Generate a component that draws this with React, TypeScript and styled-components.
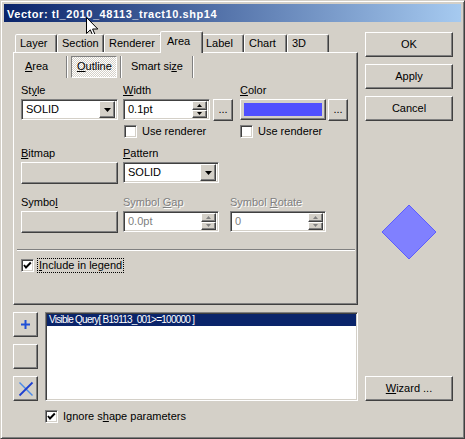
import React from "react";
import styled, { createGlobalStyle, css } from "styled-components";

const face = "#d4d0c8";
const shadow = "#808080";
const dark = "#404040";

const GlobalStyle = createGlobalStyle`
  html, body { margin: 0; padding: 0; background: ${face}; }
  body {
    font-family: Tahoma, "Liberation Sans", Arial, sans-serif;
    font-size: 11px;
    line-height: 13px;
    color: #000;
  }
`;

const raised = css`
  border: 1px solid;
  border-color: #fff ${dark} ${dark} #fff;
  box-shadow: inset -1px -1px ${shadow}, inset 1px 1px ${face};
`;

const sunken = css`
  border: 1px solid;
  border-color: ${shadow} #fff #fff ${shadow};
  box-shadow: inset 1px 1px ${dark}, inset -1px -1px ${face};
`;

const Window = styled.div`
  position: relative;
  width: 465px;
  height: 439px;
  box-sizing: border-box;
  background: ${face};
  border: 1px solid;
  border-color: ${face} ${dark} ${dark} ${face};
  box-shadow: inset 1px 1px #fff, inset -1px -1px ${shadow};
  padding: 3px;
  display: flex;
  flex-direction: column;
`;

const TitleBar = styled.div`
  height: 18px;
  box-sizing: border-box;
  padding: 2px 0 0 3px;
  line-height: 16px;
  background: linear-gradient(to right, #0a246a, #a6caf0);
  color: #fff;
  font-weight: bold;
  letter-spacing: 0.55px;
  white-space: nowrap;
`;

const Cursor = styled.svg`
  position: absolute;
  left: 85px;
  top: 16px;
`;

const Body = styled.div`
  flex: 1;
  display: grid;
  grid-template-columns: 345px 88px;
  grid-template-rows: 274px 89px auto;
  column-gap: 7px;
  row-gap: 7px;
  padding: 9px 8px 0 9px;
`;

/* ---------- tabs ---------- */

const TabControl = styled.div`
  display: flex;
  flex-direction: column;
`;

const TabStrip = styled.div`
  display: flex;
  align-items: flex-end;
  height: 21px;
  padding-left: 2px;
`;

const Tab = styled.div<{ $w: number; $active?: boolean }>`
  position: relative;
  z-index: ${(p) => (p.$active ? 2 : 1)};
  box-sizing: border-box;
  width: ${(p) => p.$w}px;
  height: ${(p) => (p.$active ? 22 : 18)}px;
  margin: ${(p) => (p.$active ? "0 -2px -1px -2px" : "0")};
  padding: ${(p) => (p.$active ? "3px 0 0 6px" : "2px 0 0 4px")};
  border: 1px solid;
  border-bottom: none;
  border-color: #fff ${dark} transparent #fff;
  border-radius: 2px 2px 0 0;
  box-shadow: inset -1px 0 ${shadow};
  background: ${face};
  white-space: nowrap;
`;

const Panel = styled.div`
  box-sizing: border-box;
  height: 253px;
  border: 1px solid;
  border-color: #fff ${dark} ${dark} #fff;
  box-shadow: inset -1px -1px ${shadow};
  padding: 3px 0 0 7px;
  display: flex;
  flex-direction: column;
`;

const SubTabs = styled.div`
  display: flex;
  align-items: center;
  height: 22px;
  margin-left: -2px;
`;

const SubTab = styled.div<{ $w: number; $pressed?: boolean }>`
  box-sizing: border-box;
  width: ${(p) => p.$w}px;
  height: 22px;
  padding: 4px 0 0 6px;
  white-space: nowrap;
  ${(p) =>
    p.$pressed &&
    css`
      border: 1px solid;
      border-color: ${shadow} #fff #fff ${shadow};
      padding: 3px 0 0 5px;
      background: repeating-conic-gradient(#fff 0 25%, ${face} 0 50%) 0 0 / 2px 2px;
    `}
`;

const SubSep = styled.div`
  width: 2px;
  height: 22px;
  box-sizing: border-box;
  border-left: 1px solid ${shadow};
  border-right: 1px solid #fff;
  margin: 0 3px;
`;

/* ---------- form ---------- */

const FormRow = styled.div<{ $cols: string; $mt: number }>`
  display: grid;
  grid-template-columns: ${(p) => p.$cols};
  align-items: start;
  margin-top: ${(p) => p.$mt}px;
`;

const Field = styled.div`
  display: flex;
  flex-direction: column;
`;

const Label = styled.div<{ $disabled?: boolean }>`
  height: 13px;
  margin-bottom: 2px;
  white-space: nowrap;
  color: ${(p) => (p.$disabled ? shadow : "#000")};
  text-shadow: ${(p) => (p.$disabled ? "1px 1px #fff" : "none")};
`;

const Inline = styled.div<{ $gap: number }>`
  display: flex;
  gap: ${(p) => p.$gap}px;
`;

const Combo = styled.div<{ $w: number }>`
  ${sunken};
  box-sizing: border-box;
  width: ${(p) => p.$w}px;
  height: 21px;
  background: #fff;
  display: flex;
  align-items: center;
  padding: 2px;
`;

const FieldText = styled.span<{ $disabled?: boolean }>`
  flex: 1;
  padding-left: 2px;
  color: ${(p) => (p.$disabled ? shadow : "#000")};
`;

const DropButton = styled.div`
  ${raised};
  box-sizing: border-box;
  width: 16px;
  height: 17px;
  background: ${face};
  display: flex;
  align-items: center;
  justify-content: center;
`;

const SpinBox = styled(Combo)``;

const SpinButtons = styled.div`
  display: flex;
  flex-direction: column;
  width: 15px;
  height: 17px;
`;

const SpinHalf = styled.div`
  ${raised};
  flex: 1;
  box-sizing: border-box;
  background: ${face};
  display: flex;
  align-items: center;
  justify-content: center;
`;

const Button = styled.div<{ $w: number; $h: number }>`
  ${raised};
  box-sizing: border-box;
  width: ${(p) => p.$w}px;
  height: ${(p) => p.$h}px;
  background: ${face};
  display: flex;
  align-items: center;
  justify-content: center;
  white-space: nowrap;
`;

const DotsButton = styled(Button)`
  align-items: flex-end;
  padding-bottom: 5px;
  line-height: 11px;
`;

const ColorButton = styled(Button)`
  padding: 3px;
`;

const Swatch = styled.div<{ $color: string }>`
  flex: 1;
  align-self: stretch;
  background: ${(p) => p.$color};
`;

const CheckLine = styled.div<{ $ml?: number }>`
  display: flex;
  align-items: center;
  gap: 5px;
  height: 13px;
  margin-left: ${(p) => p.$ml ?? 0}px;
  white-space: nowrap;
`;

const Box = styled.span`
  ${sunken};
  box-sizing: border-box;
  width: 13px;
  height: 13px;
  background: #fff;
  display: inline-flex;
`;

const FocusText = styled.span`
  outline: 1px dotted #000;
  outline-offset: 0;
  padding: 0 1px;
  margin-left: -1px;
`;

const Separator = styled.div`
  height: 2px;
  box-sizing: border-box;
  border-top: 1px solid ${shadow};
  border-bottom: 1px solid #fff;
  margin: 16px 2px 0 -4px;
`;

/* ---------- right column ---------- */

const SideButtons = styled.div`
  display: flex;
  flex-direction: column;
  gap: 7px;
  padding-top: 1px;
`;

const DiamondWrap = styled.div`
  display: flex;
  justify-content: center;
  margin-top: 83px;
`;

const WizardCell = styled.div`
  align-self: end;
`;

/* ---------- bottom ---------- */

const ListArea = styled.div`
  display: flex;
  gap: 7px;
`;

const ToolColumn = styled.div`
  display: flex;
  flex-direction: column;
  gap: 7px;
`;

const ListBox = styled.div`
  ${sunken};
  flex: 1;
  box-sizing: border-box;
  height: 89px;
  background: #fff;
  padding: 1px 1px 0 1px;
`;

const ListItem = styled.div<{ $selected?: boolean }>`
  height: 12px;
  line-height: 12px;
  padding-left: 2px;
  font-size: 10px;
  letter-spacing: -0.75px;
  white-space: nowrap;
  background: ${(p) => (p.$selected ? "#0a246a" : "transparent")};
  color: ${(p) => (p.$selected ? "#fff" : "#000")};
`;

const BottomCheck = styled.div`
  grid-column: 1 / 3;
  padding: 2px 0 0 32px;
`;

/* ---------- drawings ---------- */

const Arrow = ({ dir, w, h, color }: { dir: "up" | "down"; w: number; h: number; color: string }) => (
  <svg width={w} height={h} viewBox={`0 0 ${w} ${h}`}>
    <polygon
      points={dir === "up" ? `0,${h} ${w / 2},0 ${w},${h}` : `0,0 ${w},0 ${w / 2},${h}`}
      fill={color}
    />
  </svg>
);

const CheckMark = () => (
  <svg width="11" height="11" viewBox="0 0 11 11">
    <polyline points="2,5 4,7.5 8.8,2.5" fill="none" stroke="#000" strokeWidth="1.9" />
  </svg>
);

const CheckBox = ({ checked }: { checked?: boolean }) => <Box>{checked && <CheckMark />}</Box>;

const DropCombo = ({ w, value }: { w: number; value: string }) => (
  <Combo $w={w}>
    <FieldText>{value}</FieldText>
    <DropButton>
      <Arrow dir="down" w={7} h={4} color="#000" />
    </DropButton>
  </Combo>
);

const Spin = ({ w, value, disabled }: { w: number; value: string; disabled?: boolean }) => (
  <SpinBox $w={w}>
    <FieldText $disabled={disabled}>{value}</FieldText>
    <SpinButtons>
      <SpinHalf>
        <Arrow dir="up" w={5} h={3} color={disabled ? shadow : "#000"} />
      </SpinHalf>
      <SpinHalf>
        <Arrow dir="down" w={5} h={3} color={disabled ? shadow : "#000"} />
      </SpinHalf>
    </SpinButtons>
  </SpinBox>
);

const tabs = [
  { label: "Layer", w: 42 },
  { label: "Section", w: 47 },
  { label: "Renderer", w: 58 },
  { label: "Area", w: 43, active: true },
  { label: "Label", w: 43 },
  { label: "Chart", w: 43 },
  { label: "3D", w: 42 },
];

const colsA = "102px 117px 110px";
const colsD = "102px 107px 110px";

export default function App() {
  return (
    <>
      <GlobalStyle />
      <Window>
        <TitleBar>Vector: tl_2010_48113_tract10.shp14</TitleBar>
        <Body>
          <TabControl>
            <TabStrip>
              {tabs.map((t) => (
                <Tab key={t.label} $w={t.w} $active={t.active}>
                  {t.label}
                </Tab>
              ))}
            </TabStrip>
            <Panel>
              <SubTabs>
                <SubTab $w={44}>
                  <u>A</u>rea
                </SubTab>
                <SubSep />
                <SubTab $w={46} $pressed>
                  <u>O</u>utline
                </SubTab>
                <SubSep />
                <SubTab $w={64}>
                  Smart si<u>z</u>e
                </SubTab>
                <SubSep />
              </SubTabs>

              <FormRow $cols={colsA} $mt={6}>
                <Field>
                  <Label>
                    St<u>y</u>le
                  </Label>
                  <DropCombo w={97} value="SOLID" />
                </Field>
                <Field>
                  <Label>
                    <u>W</u>idth
                  </Label>
                  <Inline $gap={3}>
                    <Spin w={87} value="0.1pt" />
                    <DotsButton $w={20} $h={22}>...</DotsButton>
                  </Inline>
                </Field>
                <Field>
                  <Label>
                    <u>C</u>olor
                  </Label>
                  <Inline $gap={2}>
                    <ColorButton $w={86} $h={21}>
                      <Swatch $color="#5050ff" />
                    </ColorButton>
                    <DotsButton $w={20} $h={22}>...</DotsButton>
                  </Inline>
                </Field>
              </FormRow>

              <FormRow $cols={colsA} $mt={4}>
                <span />
                <CheckLine $ml={1}>
                  <CheckBox />
                  Use renderer
                </CheckLine>
                <CheckLine>
                  <CheckBox />
                  Use renderer
                </CheckLine>
              </FormRow>

              <FormRow $cols={colsA} $mt={9}>
                <Field>
                  <Label>
                    <u>B</u>itmap
                  </Label>
                  <Button $w={97} $h={22} />
                </Field>
                <Field>
                  <Label>
                    <u>P</u>attern
                  </Label>
                  <DropCombo w={96} value="SOLID" />
                </Field>
              </FormRow>

              <FormRow $cols={colsD} $mt={12}>
                <Field>
                  <Label>
                    Symbo<u>l</u>
                  </Label>
                  <Button $w={97} $h={22} />
                </Field>
                <Field>
                  <Label $disabled>
                    Symbol <u>G</u>ap
                  </Label>
                  <Spin w={96} value="0.0pt" disabled />
                </Field>
                <Field>
                  <Label $disabled>
                    Symbol <u>R</u>otate
                  </Label>
                  <Spin w={96} value="0" disabled />
                </Field>
              </FormRow>

              <Separator />

              <FormRow $cols="1fr" $mt={8}>
                <CheckLine>
                  <CheckBox checked />
                  <FocusText>
                    <u>I</u>nclude in legend
                  </FocusText>
                </CheckLine>
              </FormRow>
            </Panel>
          </TabControl>

          <div>
            <SideButtons>
              <Button $w={88} $h={25}>OK</Button>
              <Button $w={88} $h={25}>Apply</Button>
              <Button $w={88} $h={25}>Cancel</Button>
            </SideButtons>
            <DiamondWrap>
              <svg width="56" height="56" viewBox="0 0 56 56">
                <polygon points="28,1 55,28 28,55 1,28" fill="#8080ff" stroke="#5c5cff" strokeWidth="1" />
              </svg>
            </DiamondWrap>
          </div>

          <ListArea>
            <ToolColumn>
              <Button $w={25} $h={25}>
                <svg width="11" height="11" viewBox="0 0 11 11">
                  <path d="M5.5 1v9M1 5.5h9" stroke="#1f4fd6" strokeWidth="2" />
                </svg>
              </Button>
              <Button $w={25} $h={25} />
              <Button $w={25} $h={25}>
                <svg width="16" height="16" viewBox="0 0 16 16">
                  <path d="M1.5 1.5L14.5 14.5" stroke="#4a8ae8" strokeWidth="1.4" />
                  <path d="M14.5 1.5L1.5 14.5" stroke="#1d3fd0" strokeWidth="1.8" />
                </svg>
              </Button>
            </ToolColumn>
            <ListBox>
              <ListItem $selected>Visible Query[ B19113_001&gt;=100000 ]</ListItem>
            </ListBox>
          </ListArea>

          <WizardCell>
            <Button $w={88} $h={25}>
              <span>
                <u>W</u>izard ...
              </span>
            </Button>
          </WizardCell>

          <BottomCheck>
            <CheckLine>
              <CheckBox checked />
              <span>
                Ignore s<u>h</u>ape parameters
              </span>
            </CheckLine>
          </BottomCheck>
        </Body>

        <Cursor width="13" height="20" viewBox="0 0 13 20">
          <path
            d="M0.5 0.5V16.5L4.3 12.8L6.8 18.7L9.1 17.7L6.6 12H11.8Z"
            fill="#fff"
            stroke="#000"
            strokeWidth="1"
            strokeLinejoin="miter"
          />
        </Cursor>
      </Window>
    </>
  );
}
